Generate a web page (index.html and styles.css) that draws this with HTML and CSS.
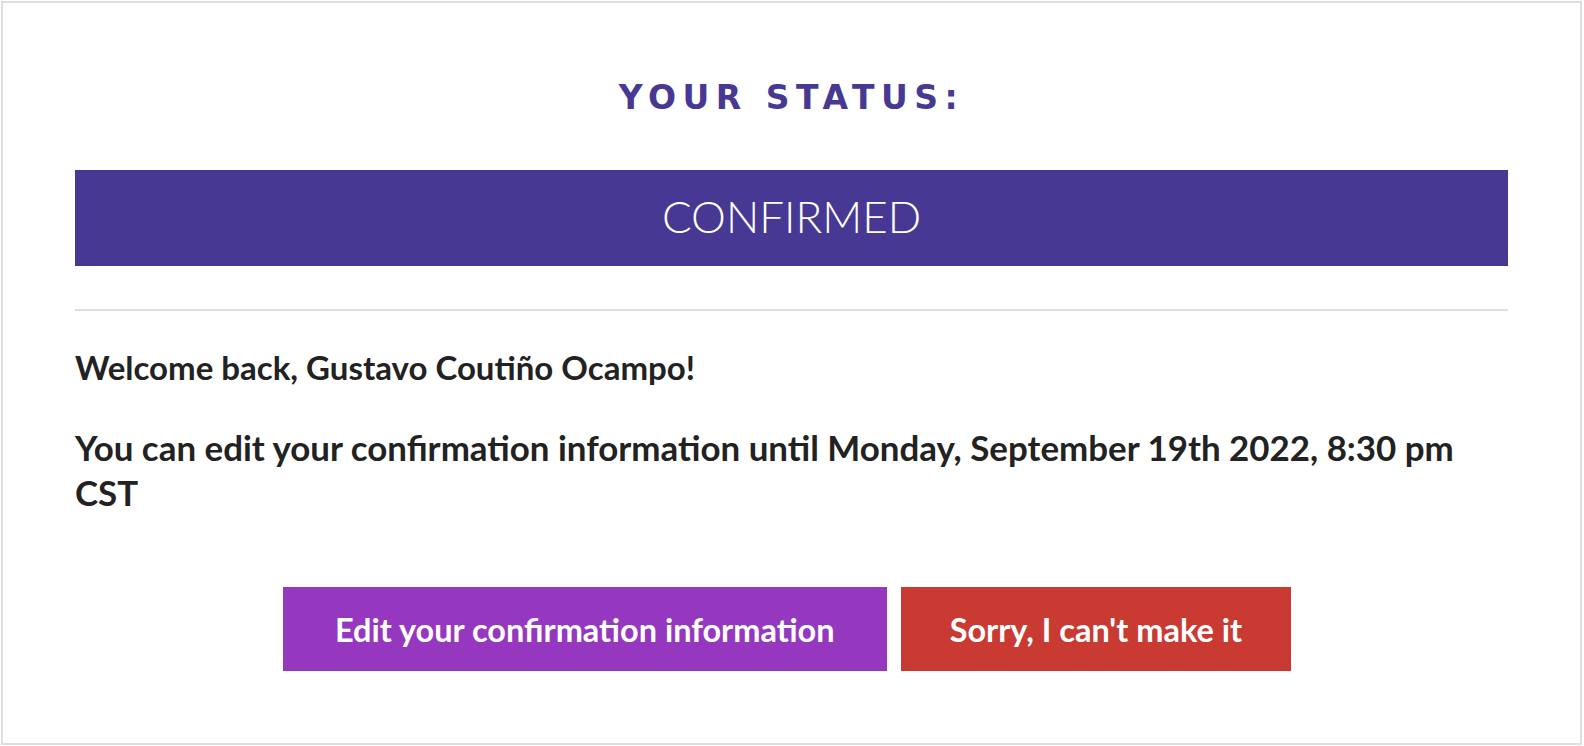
FILE: index.html
```html
<!DOCTYPE html>
<html lang="en">
<head>
<meta charset="utf-8">
<title>Your status</title>
<link rel="stylesheet" href="styles.css">
</head>
<body>
<div class="frame">
  <h2 class="status-title">YOUR STATUS:</h2>
  <div class="status-bar">CONFIRMED</div>
  <hr class="divider">
  <p class="message">Welcome back, Gustavo Coutiño Ocampo!</p>
  <p class="message message-deadline">You can edit your confirmation information until Monday, September 19th 2022, 8:30 pm CST</p>
  <div class="actions">
    <a class="btn btn-edit" href="#">Edit your confirmation information</a>
    <a class="btn btn-decline" href="#">Sorry, I can't make it</a>
  </div>
</div>
</body>
</html>
```

FILE: styles.css
```css
html, body {
  margin: 0;
  padding: 0;
  background: #ffffff;
}

.frame {
  margin: 1px 0 0 1px;
  width: 1581px;
  box-sizing: border-box;
  border: 2px solid #dedede;
  padding: 75px 72px 72px;
  font-family: Lato, "Liberation Sans", sans-serif;
  color: #222222;
}

.status-title {
  margin: 0 0 52px;
  font-family: "DejaVu Sans", Inter, sans-serif;
  font-weight: 700;
  font-size: 33px;
  line-height: 40px;
  letter-spacing: 6.5px;
  text-align: center;
  color: #463893;
}

.status-bar {
  height: 96px;
  box-sizing: border-box;
  padding-top: 26px;
  background: #463893;
  color: #ffffff;
  font-weight: 300;
  font-size: 44px;
  line-height: 40px;
  text-align: center;
}

.divider {
  margin: 43px 0 0;
  border: 0;
  height: 2px;
  background: #dedede;
}

.message {
  margin: 34px 0 0;
  font-weight: 700;
  font-size: 33px;
  line-height: 45px;
}

.message-deadline {
  margin-top: 35px;
  font-size: 34.9px;
}

.actions {
  margin-top: 72px;
  display: flex;
  justify-content: center;
  gap: 14px;
  padding-right: 9px;
}

.btn {
  display: block;
  height: 84px;
  box-sizing: border-box;
  padding-top: 25px;
  font-weight: 700;
  font-size: 32.5px;
  line-height: 36px;
  color: #ffffff;
  text-decoration: none;
}

.btn-edit {
  padding-left: 52px;
  padding-right: 52px;
  background: #9538bf;
}

.btn-decline {
  padding-left: 49px;
  padding-right: 49px;
  background: #c93a33;
}
```
